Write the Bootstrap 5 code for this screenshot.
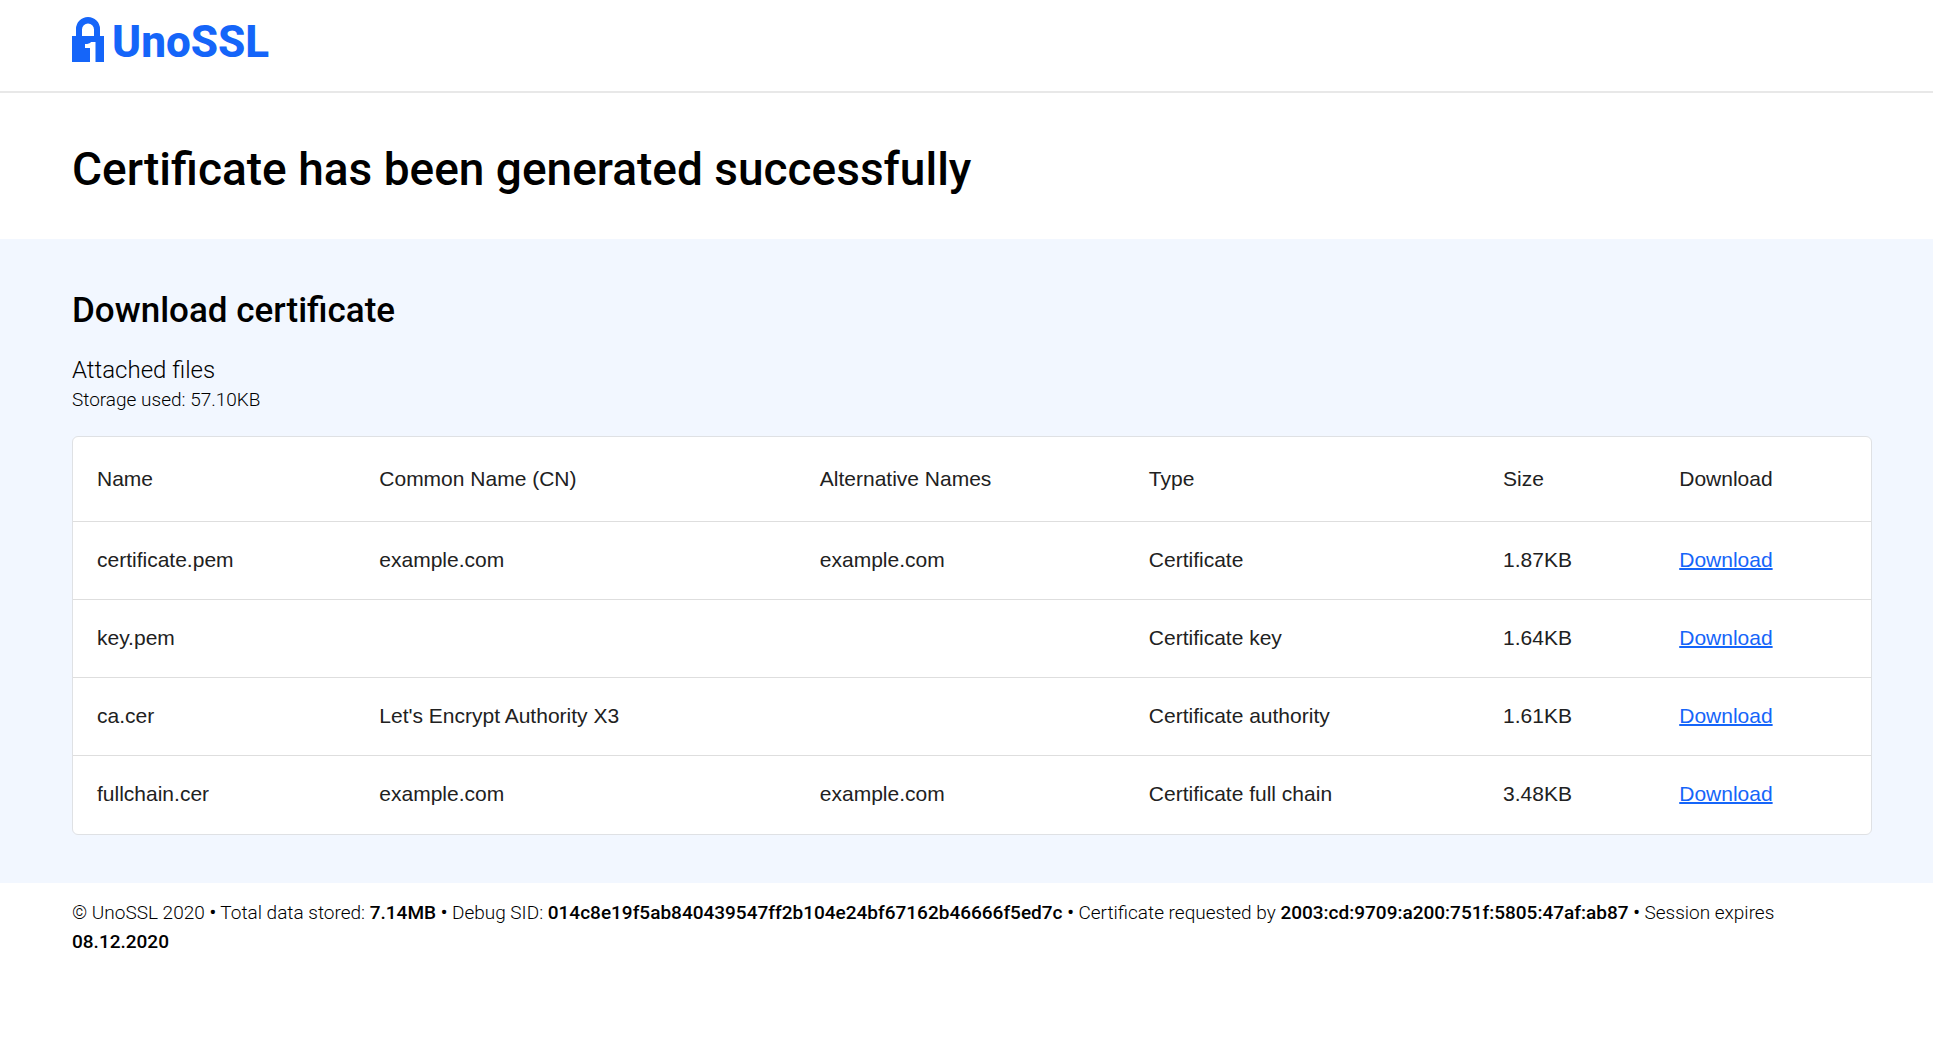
<!DOCTYPE html>
<html lang="en">
<head>
<meta charset="utf-8">
<meta name="viewport" content="width=device-width, initial-scale=1">
<title>UnoSSL</title>
<link href="https://cdn.jsdelivr.net/npm/bootstrap@5.3.0/dist/css/bootstrap.min.css" rel="stylesheet">
<style>
  body { font-family: Roboto, "Liberation Sans", sans-serif; color: #000; font-size: 19px; line-height: 29px; }
  .page-gutter { padding-left: 72px; padding-right: 61px; }
  .site-header { border-bottom: 2px solid #e8e8e8; padding-top: 17px; padding-bottom: 23px; }
  .logo { color: #1565f9; font-weight: 800; font-size: 44px; line-height: 51px; gap: 8px; }
  .logo:hover { color: #1565f9; }
  .logo svg { width: 32px; height: 46px; }
  .page-title { font-size: 46px; line-height: 60px; font-weight: 500; padding-top: 46px; padding-bottom: 40px; }
  .files { background: #f2f7ff; padding-top: 52px; padding-bottom: 48px; }
  .files h2 { font-size: 35px; line-height: 40px; font-weight: 500; margin-bottom: 24px; }
  .files h3 { font-size: 24px; line-height: 30px; font-weight: 300; }
  .files p { margin-bottom: 22px; }
  .files-panel { border: 1px solid #dfe1e4; border-radius: 6px; background: #fff; }
  .files-table { table-layout: fixed; font-family: "Liberation Sans", Arial, sans-serif; font-size: 21px; line-height: 29px; --bs-table-bg: transparent; --bs-table-color: #212121; }
  .files-table > :not(caption) > * > * { padding: 23px 24px 25px; border-bottom: 1px solid #dedede; }
  .files-table > thead > tr > th { font-weight: 400; padding-top: 27px; padding-bottom: 28px; }
  .files-table > tbody > tr:last-child > td { border-bottom-color: transparent; }
  .files-table a { color: #1565f9; text-decoration-thickness: 2px; }
  .files-table col:nth-child(1) { width: 15.7%; }
  .files-table col:nth-child(2) { width: 24.5%; }
  .files-table col:nth-child(3) { width: 18.3%; }
  .files-table col:nth-child(4) { width: 19.7%; }
  .files-table col:nth-child(5) { width: 9.8%; }
  .site-footer { padding-top: 15px; padding-bottom: 16px; }
  .light-text { font-weight: 300; }
  .site-footer b { font-weight: 500; }
</style>
</head>
<body>
<header class="site-header page-gutter d-flex">
  <a class="logo d-flex align-items-start text-decoration-none" href="#">
    <svg viewBox="0 0 32 46" aria-hidden="true">
      <path fill="#1565f9" fill-rule="evenodd" d="M0 19H4V12a12 12 0 0 1 24 0V19H32V45H23.500V25H19C18 26.500 16 27 13 27V31H18V45H0ZM10 19H22V12.500a6 6 0 0 0-12 0Z"/>
    </svg>
    <span>UnoSSL</span>
  </a>
</header>
<main>
  <h1 class="page-title page-gutter mb-0">Certificate has been generated successfully</h1>
  <section class="files page-gutter">
    <h2>Download certificate</h2>
    <h3 class="mb-0">Attached files</h3>
    <p class="light-text">Storage used: 57.10KB</p>
    <div class="files-panel table-responsive">
      <table class="table files-table mb-0">
        <colgroup><col><col><col><col><col><col></colgroup>
        <thead>
          <tr><th scope="col">Name</th><th scope="col">Common Name (CN)</th><th scope="col">Alternative Names</th><th scope="col">Type</th><th scope="col">Size</th><th scope="col">Download</th></tr>
        </thead>
        <tbody>
          <tr><td>certificate.pem</td><td>example.com</td><td>example.com</td><td>Certificate</td><td>1.87KB</td><td><a href="#">Download</a></td></tr>
          <tr><td>key.pem</td><td></td><td></td><td>Certificate key</td><td>1.64KB</td><td><a href="#">Download</a></td></tr>
          <tr><td>ca.cer</td><td>Let's Encrypt Authority X3</td><td></td><td>Certificate authority</td><td>1.61KB</td><td><a href="#">Download</a></td></tr>
          <tr><td>fullchain.cer</td><td>example.com</td><td>example.com</td><td>Certificate full chain</td><td>3.48KB</td><td><a href="#">Download</a></td></tr>
        </tbody>
      </table>
    </div>
  </section>
</main>
<footer class="site-footer page-gutter light-text">
  © UnoSSL 2020 <b>•</b> Total data stored: <b>7.14MB</b> <b>•</b> Debug SID: <b>014c8e19f5ab840439547ff2b104e24bf67162b46666f5ed7c</b> <b>•</b> Certificate requested by <b>2003:cd:9709:a200:751f:5805:47af:ab87</b> <b>•</b> Session expires <b>08.12.2020</b>
</footer>
<script src="https://cdn.jsdelivr.net/npm/bootstrap@5.3.0/dist/js/bootstrap.bundle.min.js"></script>
</body>
</html>
